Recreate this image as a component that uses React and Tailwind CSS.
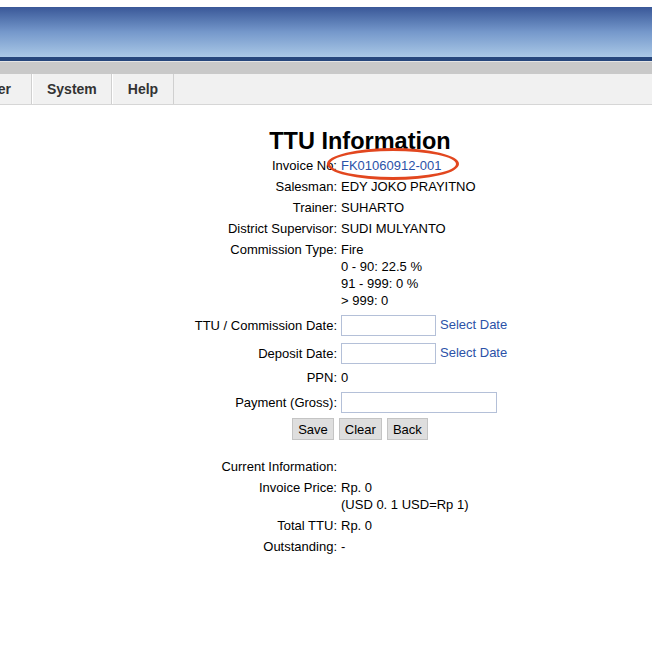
import React from "react";

const Row = ({ label, children, input }) => (
  <>
    <div className={`text-right ${input ? "py-[3.5px] leading-[21px]" : "py-[2px] leading-[17px]"}`}>{label}</div>
    <div className={input ? "py-[3.5px] flex items-center" : "py-[2px] leading-[17px]"}>{children}</div>
  </>
);

const DateInput = () => (
  <div className="flex items-center gap-[4px]">
    <input className="w-[95px] h-[21px] border border-[#b4c0d8] bg-white outline-none" />
    <a className="text-[#2b52a8] cursor-pointer">Select Date</a>
  </div>
);

const Btn = ({ children }) => (
  <button className="h-[22px] px-[5px] bg-[#dedede] border border-[#c4c4c4] text-[13px] leading-none text-black">
    {children}
  </button>
);

export default function App() {
  return (
    <div
      className="w-[652px] h-[658px] overflow-hidden bg-white text-black text-[13px]"
      style={{ fontFamily: '"Liberation Sans", Arial, sans-serif' }}
    >
      {/* header banner */}
      <div className="h-[7px] bg-white" />
      <div className="h-[50px] bg-gradient-to-b from-[#3a5898] via-[#7598cb] to-[#aac8e6]" />
      <div className="h-[4px] bg-[#26467c]" />
      <div className="h-[13px] bg-[#c9c9c9] border-t border-[#e4e4e4]" />

      {/* menu */}
      <div className="flex h-[31px] bg-[#f1f1f1] border-b border-[#d6d6d6] text-[14px] font-bold text-[#333]">
        <div className="flex items-center pr-[20px] w-[32px] shrink-0 justify-end border-r border-[#d0d0d0]">
          <span className="whitespace-nowrap">er</span>
        </div>
        <div className="flex items-center px-[14px] border-r border-[#d0d0d0] border-l border-l-white">System</div>
        <div className="flex items-center px-[15px] border-r border-[#d0d0d0] border-l border-l-white">Help</div>
      </div>

      {/* content */}
      <div className="pl-[68px] pt-[22px] text-center">
        <h1 className="text-[23.5px] font-bold leading-[28px]">TTU Information</h1>
      </div>

      <div className="grid grid-cols-[157px_auto] gap-x-[4px] ml-[180px]">
        <Row label="Invoice No:">
          <span className="relative inline-block">
            <a className="text-[#2b52a8] cursor-pointer">FK01060912-001</a>
            <span className="absolute left-[-14px] right-[-18px] top-[-9px] bottom-[-6px] rounded-[50%] border-[3.5px] border-[#e2471f]" />
          </span>
        </Row>
        <Row label="Salesman:">EDY JOKO PRAYITNO</Row>
        <Row label="Trainer:">SUHARTO</Row>
        <Row label="District Supervisor:">SUDI MULYANTO</Row>
        <Row label="Commission Type:">
          <div>Fire</div>
          <div>0 - 90: 22.5 %</div>
          <div>91 - 999: 0 %</div>
          <div>&gt; 999: 0</div>
        </Row>
        <Row label="TTU / Commission Date:" input>
          <DateInput />
        </Row>
        <Row label="Deposit Date:" input>
          <DateInput />
        </Row>
        <Row label="PPN:">0</Row>
        <Row label="Payment (Gross):" input>
          <input className="w-[156px] h-[21px] border border-[#b4c0d8] bg-white outline-none" />
        </Row>
      </div>

      <div className="pl-[68px] pt-[2px] flex justify-center gap-[5px]">
        <Btn>Save</Btn>
        <Btn>Clear</Btn>
        <Btn>Back</Btn>
      </div>

      <div className="grid grid-cols-[157px_auto] gap-x-[4px] ml-[180px] mt-[16px]">
        <Row label="Current Information:" />
        <Row label="Invoice Price:">
          <div>Rp. 0</div>
          <div>(USD 0. 1 USD=Rp 1)</div>
        </Row>
        <Row label="Total TTU:">Rp. 0</Row>
        <Row label="Outstanding:">-</Row>
      </div>
    </div>
  );
}
